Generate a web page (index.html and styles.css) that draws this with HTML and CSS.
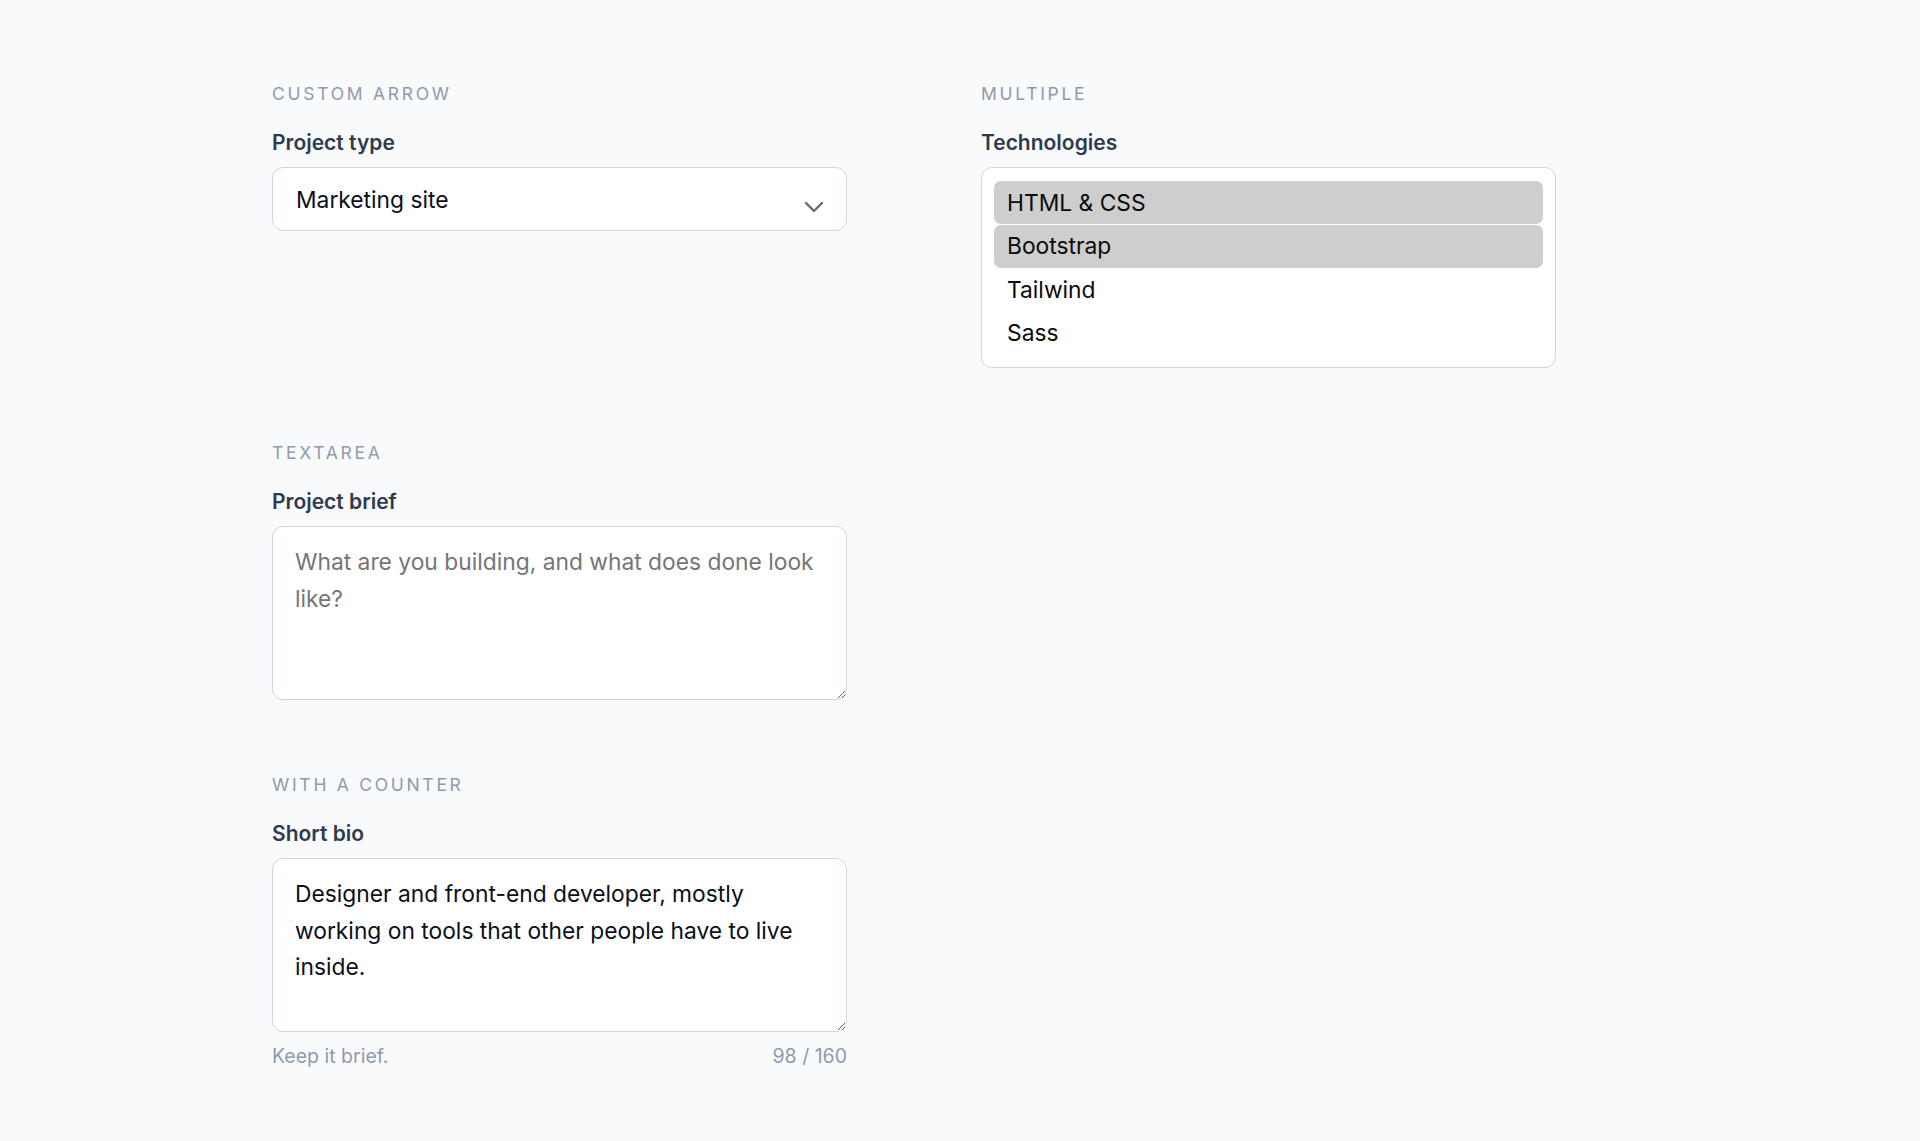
FILE: index.html
```html
<!DOCTYPE html>
<html lang="en">
<head>
<meta charset="utf-8">
<title>Form fields</title>
<link rel="stylesheet" href="styles.css">
</head>
<body>
<main class="page">
  <div class="grid">
    <section class="field">
      <div class="eyebrow">Custom arrow</div>
      <label class="label" for="ptype">Project type</label>
      <div class="select-wrap">
        <select id="ptype" class="select">
          <option>Marketing site</option>
          <option>Web app</option>
          <option>E-commerce</option>
        </select>
        <svg class="chevron" viewBox="0 0 20 12" width="20" height="12" aria-hidden="true">
          <path d="M2 2 L10 10 L18 2" fill="none" stroke="#5f6b7c" stroke-width="2.4" stroke-linecap="round" stroke-linejoin="round"/>
        </svg>
      </div>
    </section>

    <section class="field">
      <div class="eyebrow">Multiple</div>
      <div class="label">Technologies</div>
      <div class="listbox" role="listbox" aria-multiselectable="true">
        <div class="option selected" role="option" aria-selected="true">HTML &amp; CSS</div>
        <div class="option selected" role="option" aria-selected="true">Bootstrap</div>
        <div class="option" role="option" aria-selected="false">Tailwind</div>
        <div class="option" role="option" aria-selected="false">Sass</div>
      </div>
    </section>

    <section class="field col1">
      <div class="eyebrow">Textarea</div>
      <label class="label" for="brief">Project brief</label>
      <textarea id="brief" class="textarea" placeholder="What are you building, and what does done look like?"></textarea>
    </section>

    <section class="field col1">
      <div class="eyebrow">With a counter</div>
      <label class="label" for="bio">Short bio</label>
      <textarea id="bio" class="textarea">Designer and front-end developer, mostly working on tools that other people have to live inside.</textarea>
      <div class="help">
        <span>Keep it brief.</span>
        <span>98 / 160</span>
      </div>
    </section>
  </div>
</main>
</body>
</html>
```

FILE: styles.css
```css
* { box-sizing: border-box; }

html, body {
  margin: 0;
  padding: 0;
  background: #f8fafc;
}

body {
  font-family: Inter, "Noto Sans", "Liberation Sans", sans-serif;
  color: #0f172a;
}

.page {
  padding: 82px 0 0 272px;
}

.grid {
  display: grid;
  grid-template-columns: 575px 575px;
  column-gap: 134px;
  row-gap: 73px;
  align-items: start;
}

.col1 { grid-column: 1; }

.field {
  display: flex;
  flex-direction: column;
}

.eyebrow {
  font-size: 17.5px;
  line-height: 24px;
  letter-spacing: 0.155em;
  text-transform: uppercase;
  color: #8f9bad;
  margin-bottom: 23px;
}

.label {
  font-size: 21px;
  line-height: 27px;
  font-weight: 600;
  color: #2f3b4d;
  margin-bottom: 11px;
}

.select-wrap {
  position: relative;
}

.select {
  display: block;
  width: 100%;
  height: 64px;
  appearance: none;
  -webkit-appearance: none;
  background: #ffffff;
  border: 1.5px solid #cfd6df;
  border-radius: 11px;
  padding: 0 60px 0 23px;
  font-family: inherit;
  font-size: 22.8px;
  color: #0b0f19;
  outline: none;
}

.chevron {
  position: absolute;
  right: 23px;
  top: 34px;
  pointer-events: none;
}

.listbox {
  background: #ffffff;
  border: 1.5px solid #cfd6df;
  border-radius: 11px;
  padding: 12.5px 12px 12.5px;
  display: flex;
  flex-direction: column;
}

.option {
  height: 43.5px;
  line-height: 43.5px;
  padding: 0 13px;
  font-size: 22.8px;
  color: #0b0b0b;
  border-radius: 7px;
}

.option.selected {
  background: #cecece;
}

.option.selected + .option.selected {
  margin-top: 1px;
  height: 42.5px;
  line-height: 42.5px;
}

.textarea {
  display: block;
  width: 100%;
  height: 174px;
  background: #ffffff;
  border: 1.5px solid #cfd6df;
  border-radius: 11px;
  padding: 17px 22px;
  font-family: inherit;
  font-size: 22.8px;
  line-height: 36.5px;
  color: #0b0f19;
  resize: vertical;
  outline: none;
}

.textarea::placeholder {
  color: #757575;
  opacity: 1;
}

.help {
  display: flex;
  justify-content: space-between;
  margin-top: 11px;
  font-size: 19.5px;
  line-height: 27px;
  color: #8f9bad;
}
```
